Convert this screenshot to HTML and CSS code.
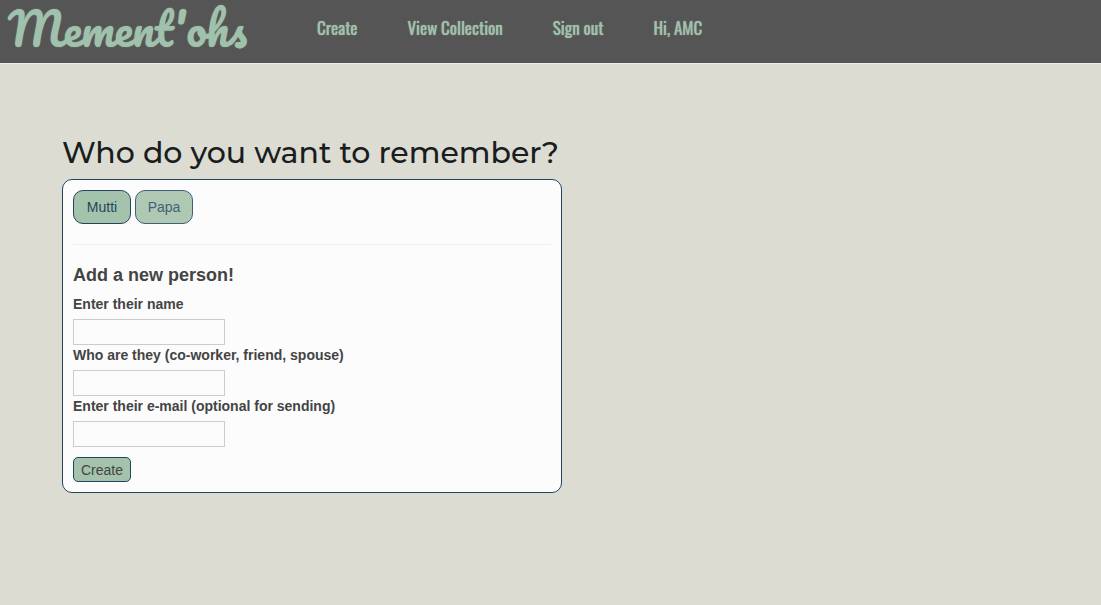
FILE: index.html
```html
<!DOCTYPE html>
<html lang="en">
<head>
<meta charset="utf-8">
<meta name="viewport" content="width=device-width, initial-scale=1">
<title>Mement'ohs</title>
<link rel="stylesheet" href="styles.css">
</head>
<body>
<header class="navbar">
  <a class="brand" href="#">Mement'ohs</a>
  <nav class="nav">
    <a href="#">Create</a>
    <a href="#">View Collection</a>
    <a href="#">Sign out</a>
    <a href="#">Hi, AMC</a>
  </nav>
</header>
<main class="content">
  <h1 class="title">Who do you want to remember?</h1>
  <section class="card">
    <div class="people">
      <button class="person" type="button">Mutti</button>
      <button class="person person-muted" type="button">Papa</button>
    </div>
    <hr class="divider">
    <form class="form">
      <h2 class="form-title">Add a new person!</h2>
      <label for="name">Enter their name</label>
      <input id="name" type="text">
      <label for="relation">Who are they (co-worker, friend, spouse)</label>
      <input id="relation" type="text">
      <label for="email">Enter their e-mail (optional for sending)</label>
      <input id="email" type="text">
      <button class="submit" type="button">Create</button>
    </form>
  </section>
</main>
</body>
</html>
```
FILE: styles.css
```css
* {
  box-sizing: border-box;
}

body {
  margin: 0;
  min-height: 100vh;
  background: #dcdcd2;
  color: #444;
  font: 14px/20px "Helvetica Neue", "Liberation Sans", Arial, sans-serif;
}

.navbar {
  display: flex;
  min-height: 64px;
  padding-left: 8px;
  gap: 70px;
  background: #555;
  border-bottom: 1px solid #eeeeea;
}

.brand {
  color: #a0c1ab;
  font: 400 45px/56px Pacifico, cursive;
  text-decoration: none;
  text-shadow: 0 0 1px #a0c1ab;
}

.nav {
  display: flex;
  gap: 50px;
}

.nav a {
  color: #a0c1ab;
  font: 400 17px/56px Oswald, "Liberation Sans Narrow", sans-serif;
  text-decoration: none;
  text-shadow: 0 0 1px #a0c1ab;
}

.content {
  padding: 71px 62px;
}

.title {
  margin: 0 0 9px;
  color: #191d20;
  font: 500 30px/35px Montserrat, Inter, sans-serif;
}

.card {
  max-width: 500px;
  padding: 10px;
  background: #fcfcfc;
  border: 1px solid #23465c;
  border-radius: 10px;
}

.people {
  display: flex;
  gap: 4px;
}

.person {
  width: 58px;
  height: 34px;
  padding: 0;
  color: #23465c;
  background: #a4c2ac;
  border: 1px solid #23465c;
  border-radius: 10px;
  font: inherit;
}

.person-muted {
  color: #41627a;
  background: #aec8b4;
  border-color: #416078;
}

.divider {
  margin: 20px 0;
  border: 0;
  border-top: 1px solid #eee;
}

.form {
  display: flex;
  flex-direction: column;
  align-items: flex-start;
}

.form-title {
  margin: 0 0 9px;
  font: bold 18px/20px "Helvetica Neue", "Liberation Sans", Arial, sans-serif;
}

.form label {
  margin-bottom: 5px;
  font-weight: bold;
}

.form input {
  width: 152px;
  height: 26px;
  padding: 2px;
  color: inherit;
  background: #fcfcfc;
  border: 1px solid #ccc;
  font: inherit;
}

.submit {
  width: 58px;
  height: 25px;
  margin-top: 10px;
  padding: 0;
  color: #444;
  background: #a4c2ac;
  border: 1px solid #23465c;
  border-radius: 5px;
  font: inherit;
}
```
